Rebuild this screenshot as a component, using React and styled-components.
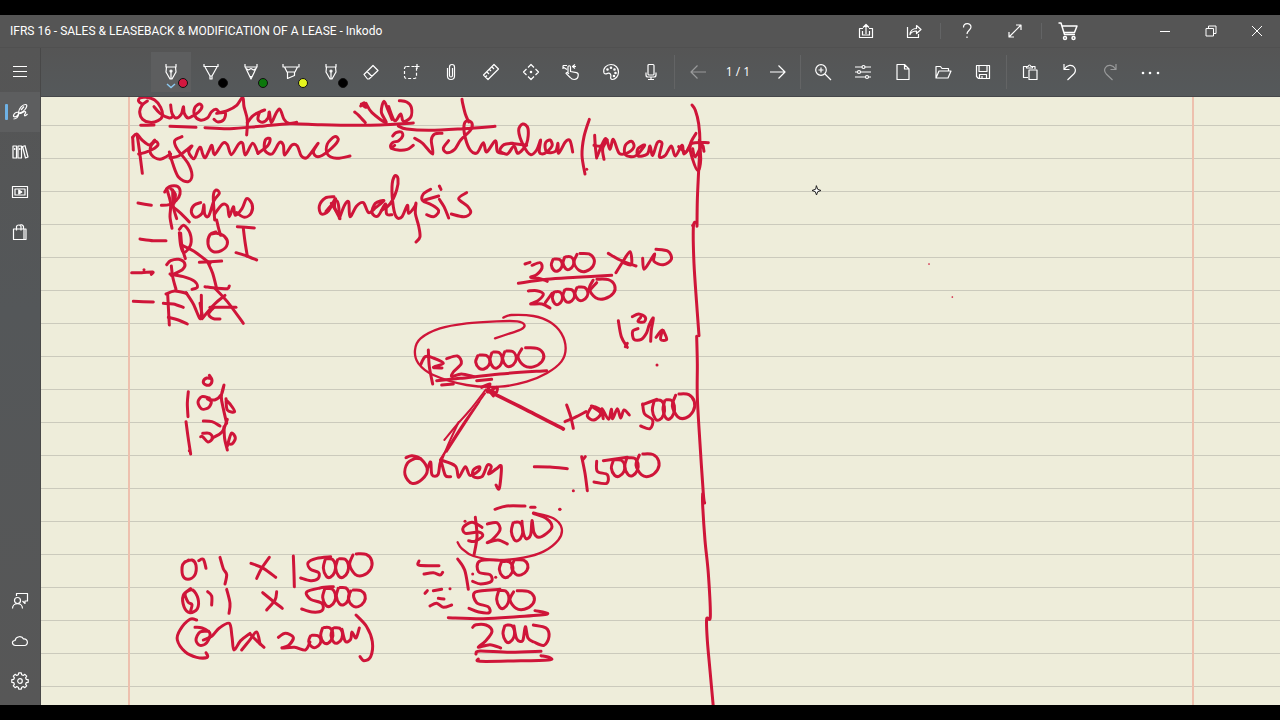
import React from "react";
import styled, { createGlobalStyle } from "styled-components";

const Global = createGlobalStyle`
  *, *::before, *::after { box-sizing: border-box; }
  body { margin: 0; background: #000; font-family: Roboto, "Open Sans", sans-serif; }
  button { font: inherit; color: inherit; border: 0; background: none; padding: 0; }
`;

const Shell = styled.div`
  display: flex;
  flex-direction: column;
  min-height: 100vh;
  padding: 15px 0;
  background: #000;
  color: #fff;
`;

const TitleBar = styled.header`
  display: flex;
  align-items: stretch;
  height: 33px;
  background: #555;
  border-bottom: 1px solid #505050;
`;

const Title = styled.h1`
  flex: 1;
  margin: 0;
  padding-left: 10px;
  font-size: 12px;
  font-weight: 400;
  line-height: 32px;
  white-space: nowrap;
  overflow: hidden;
`;

const TitleActions = styled.div`
  display: flex;
  align-items: center;
  margin-right: 50px;
`;

const Captions = styled.div`
  display: flex;
`;

const IconButton = styled.button`
  position: relative;
  display: flex;
  align-items: center;
  justify-content: center;
  flex: none;
  width: ${(p) => p.$w || 40}px;
  height: ${(p) => p.$h || 40}px;
  opacity: ${(p) => (p.$dim ? 0.4 : 1)};
  background: ${(p) => (p.$active ? "#5d5e5f" : "transparent")};
`;

const Glyph = styled.svg`
  display: block;
  flex: none;
  fill: none;
  stroke: currentColor;
  stroke-width: ${(p) => p.$weight || 1.2};
  stroke-linejoin: round;
  overflow: visible;
`;

const Divider = styled.span`
  flex: none;
  width: 1px;
  height: ${(p) => p.$h}px;
  margin: 0 ${(p) => p.$gap}px;
  background: #636465;
`;

const Body = styled.div`
  display: flex;
  flex: 1;
`;

const Sidebar = styled.nav`
  display: flex;
  flex-direction: column;
  flex: none;
  width: 41px;
  padding: 4px 0;
  background: linear-gradient(#555, #545759 40%, #575757);
  border-right: 1px solid #484848;
`;

const Spacer = styled.div`
  flex: 1;
`;

const ActiveBar = styled.span`
  position: absolute;
  left: 5px;
  top: 12px;
  width: 3px;
  height: 16px;
  border-radius: 1px;
  background: #6eb2e6;
`;

const Workspace = styled.main`
  display: flex;
  flex-direction: column;
  flex: 1;
  min-width: 0;
`;

const Toolbar = styled.div`
  display: flex;
  align-items: center;
  justify-content: center;
  height: 49px;
  background: linear-gradient(#555, #55595b);
  border-bottom: 1px solid #45474a;
`;

const Swatch = styled.span`
  position: absolute;
  left: 27px;
  top: 26px;
  width: 10px;
  height: 10px;
  border: 1px solid #111;
  border-radius: 50%;
  background: ${(p) => p.$color};
`;

const Chevron = styled.svg`
  position: absolute;
  left: 15px;
  top: 31px;
  fill: none;
  stroke: #8ccaf2;
  stroke-width: 1.4;
`;

const PageCount = styled.span`
  flex: none;
  width: 40px;
  font-family: "Open Sans", sans-serif;
  font-size: 12px;
  line-height: 20px;
  text-align: center;
  white-space: nowrap;
`;

const Paper = styled.section`
  flex: 1;
  overflow: hidden;
  background:
    linear-gradient(#edc0ae, #edc0ae) 87px 0 / 2px 100% no-repeat,
    linear-gradient(#edc0ae, #edc0ae) right 86px top 0 / 2px 100% no-repeat,
    repeating-linear-gradient(transparent 0 32px, #cbcabc 32px 33px) 0 -4px / 100% calc(100% + 4px),
    #eeedda;
`;

const Ink = styled.svg`
  display: block;
  width: 100%;
  fill: none;
  stroke: #cf1539;
  stroke-linecap: round;
  stroke-linejoin: round;
`;

const ICONS = {
  menu: <path d="M1 2.500h14M1 7.500h14M1 12.500h14" />,
  fountain: (
    <>
      <path d="M3 0v3h10V0M3.500 3L3 8l4 7h2l4-7-.5-5M8 7v8" />
      <circle cx="8" cy="7" r="1" />
    </>
  ),
  pen: <path d="M1 0v2.500h14V0M2 3l5 9v3h2v-3l5-9M7 12h2" />,
  pencil: <path d="M2 0v3h12V0M2.500 3.500L8 15l5.500-11.500M3 4.500l2.500 1.500L8 4.500 10.500 6 13 4.500M7 12.500h2" />,
  marker: <path d="M0 0v3h16V0M1.500 3l2.500 5h8l2.500-5M4.500 8v6.500l7-3V8" />,
  eraser: <path d="M1 10.500L10 1.500l5 5-9 8.500H4.500zM4 7.500l5 5" />,
  lasso: (
    <>
      <rect x="1.500" y="2.500" width="12" height="12" rx="2" strokeDasharray="3 2" />
      <path d="M14 0v5M11.500 2.500h5" />
    </>
  ),
  clip: <path d="M4.500 4v8a3.500 3.500 0 0 0 7 0V3a2.500 2.500 0 0 0-5 0v8.500a1.500 1.500 0 0 0 3 0V4" />,
  ruler: <path d="M.5 11L11 .5 15.500 5 5 15.500zM4 8l2 2M6.500 5.500l1.500 1.500M9 3l2 2M2.500 13l1.500-1.500" />,
  move: (
    <>
      <path d="M5 3.500L8 .5l3 3M5 12.500l3 3 3-3M3.500 5L.5 8l3 3M12.500 5l3 3-3 3" />
      <circle cx="8" cy="8" r=".7" fill="currentColor" />
    </>
  ),
  touch: (
    <path d="M5 9.500V3a1.200 1.200 0 0 1 2.500 0v4.500l6 1.200c1.500.4 2 1.300 1.700 3-.3 2.300-1.600 3.800-4 3.800-2 0-3-.7-4-2L3 9.300c.6-1 1.500-.6 3 .5M4 5.500L0 3M0 1.500h4M0 1.500V5M9 2.500h4M12 .5l-2.500 2 2.500 2" />
  ),
  palette: (
    <>
      <path d="M1 9C-.5 4 4 .5 8 .5c4.500 0 7.500 3.500 7.500 7.500s-3 7.500-6 7.500c-2 0-2-1.500-1.700-3 .4-2-.6-3.500-2.500-3.300C3.500 9.500 2.500 11 1 9z" />
      <circle cx="4.500" cy="5.500" r=".7" />
      <circle cx="8" cy="3.700" r=".7" />
      <circle cx="11.500" cy="5.500" r=".7" />
      <circle cx="12.500" cy="9" r=".7" />
      <circle cx="11" cy="12" r=".7" />
    </>
  ),
  mic: (
    <>
      <rect x="5" y=".5" width="6" height="10.500" rx="1" />
      <path d="M3 8.500v2.500q0 2 2 2h6q2 0 2-2V8.500M8 13v2.500M5 15.500h6" />
    </>
  ),
  back: <path d="M16 8H1M7.500 1.500L1 8l6.500 6.500" />,
  forward: <path d="M0 8h15M8.500 1.500L15 8l-6.500 6.500" />,
  zoom: (
    <>
      <circle cx="6" cy="6" r="5.300" />
      <path d="M10 10l6 6M3.500 6h5M6 3.500v5" />
    </>
  ),
  sliders: (
    <>
      <path d="M0 3h7M10 3h6M0 8h2.500M5.500 8H16M0 13h10.500M13.500 13H16" />
      <circle cx="8.500" cy="3" r="1.500" />
      <circle cx="4" cy="8" r="1.500" />
      <circle cx="12" cy="13" r="1.500" />
    </>
  ),
  file: <path d="M2 .5h7.500L14 5v10.500H2zM9.500 .5V5H14" />,
  folder: <path d="M1 14V2.500h4.500l1.500 2h6.500V7M1 14L4 7h12l-3 7z" />,
  save: <path d="M1.500 1.500h13v13h-11l-2-2zM4 1.500v6h8v-6M4.500 14.500v-4h7v4M7 12v2.500" />,
  paste: <path d="M6 13.500H1.500v-11H5M10 2.500h3V5M4.500 4V2.500h1.500q1.500-3 3 0h1.500V4zM7 6h8v9.500H7z" />,
  undo: <path d="M2 0v5.500h5.500M2.500 5C5 1 10 0 12.500 3.500c1.800 2.800.8 5-1 6.800L5.500 16" />,
  redo: <path d="M14 0v5.500H8.500M13.500 5C11 1 6 0 3.500 3.500c-1.800 2.800-.8 5 1 6.800L10.500 16" />,
  more: (
    <g fill="currentColor" stroke="none">
      <circle cx="1" cy="9" r="1.300" />
      <circle cx="8" cy="9" r="1.300" />
      <circle cx="16" cy="9" r="1.300" />
    </g>
  ),
  upload: <path d="M5 5.500H1.500v9h13v-9H11M4.500 8v4h7V8M8 11V2M5 4.500l3-3 3 3" />,
  share: <path d="M1.500 4v10.500h11V11M4 11.500c.5-4 2.500-6 6.500-6V2.500l4.500 4-4.500 4V8c-3 0-5 .8-6.500 3.500z" />,
  help: <path d="M4.500 4.500C4.500-.5 12-.5 12 4c0 3-4 3.500-4 7M8 13.500V15" />,
  expand: <path d="M2 14L14 2M9 2h5v5M2 9v5h5" />,
  cart: (
    <>
      <path d="M-1.500 0H1l3.500 11.500H15M2 3h15l-2.500 6.500H4" />
      <circle cx="5" cy="15" r="1.500" />
      <circle cx="13.500" cy="15" r="1.500" />
    </>
  ),
  minimize: <path d="M3 8.500h10" />,
  restore: <path d="M3 5.500h7.500v7.500H3zM5.500 5.500V3H13v7.500h-2.500" />,
  close: <path d="M3 3l10 10M13 3L3 13" />,
  ink: (
    <path d="M6.500 8.500C7 4 10.500.5 13.500.5c2 0 1.500 2.500-.5 5-2 2.700-5 4-6.500 3zM7 8C4 8 2 9.500 1.500 11.500c-.3 2 2.500 1.500 3.500.5s1.500-2 2-3.500M7 9c-.5 3-2.500 6-5.500 6M7.500 9.500c2 0 4-2 5.500-2 2 .5-1 3-.5 4 .5.700 1.500 0 3-1.500M9 6l3-3.500" />
  ),
  library: <path d="M1 2h3.500v12H1zM6 2h3.500v12H6zM10.500 2.500l2.500-.8L16 13l-2.500 1zM2.700 4v2M7.700 4v2" />,
  media: (
    <>
      <path d="M.5 2.500h15v11H.5zM3 5h10v6H3z" />
      <path d="M6.800 6v4l3-2z" fill="currentColor" />
    </>
  ),
  bag: <path d="M1.500 5h10.500v10.500H1.500zM12 5h2v10.500h-2M4.500 6.500v-4C5 .5 8.500.5 9 2.500v4M7 1.500c2-1.500 4-.5 4.500 1V5" />,
  feedback: (
    <>
      <circle cx="5.500" cy="7.500" r="3" />
      <path d="M.5 15.500c0-6.500 10-6.500 10 0M4.500 3V.5h11v7.500H13v2.500L10.500 8" />
    </>
  ),
  cloud: <path d="M3.500 12.500C-.5 12-.5 7.500 3 7.500 4 3 10 2.500 11.500 6c5-.5 5 6.500 1 6.500z" />,
  gear: (
    <>
      <path d="M6.700 -.2h2.600l.4 2 1.500.6 1.700-1.100 1.800 1.800-1.100 1.700.6 1.500 2 .4v2.600l-2 .4-.6 1.500 1.100 1.700-1.800 1.800-1.700-1.100-1.500.6-.4 2H6.700l-.4-2-1.500-.6-1.700 1.100-1.800-1.800 1.100-1.700-.6-1.500-2-.4V6.700l2-.4.6-1.500L1.300 3.100l1.800-1.800 1.700 1.100 1.500-.6z" />
      <circle cx="8" cy="8" r="2.300" />
    </>
  ),
};

function Icon({ name, size = 16, weight }) {
  return (
    <Glyph width={size} height={size} viewBox="0 0 16 16" $weight={weight} aria-hidden="true">
      {ICONS[name]}
    </Glyph>
  );
}

const PENS = [
  { icon: "fountain", label: "Fountain pen", color: "#d3173f", active: true },
  { icon: "pen", label: "Ballpoint pen", color: "#000" },
  { icon: "pencil", label: "Pencil", color: "#0c780c" },
  { icon: "marker", label: "Highlighter", color: "#e6f51e" },
  { icon: "fountain", label: "Second pen", color: "#000" },
];

const TOOLS = [
  ["eraser", "Eraser"],
  ["lasso", "Select"],
  ["clip", "Attach"],
  ["ruler", "Ruler"],
  ["move", "Pan"],
  ["touch", "Touch writing"],
  ["palette", "Colours"],
  ["mic", "Record"],
];

const FILE_TOOLS = [
  ["zoom", "Zoom in"],
  ["sliders", "Page settings"],
  ["file", "New"],
  ["folder", "Open"],
  ["save", "Save"],
];

/*
 * Each group of pen strokes has its own origin on the page; points are thirds of a pixel.
 * "loops" are closed round strokes: centre x, centre y, half width, half height.
 */
const INK = [
  {
    at: [120, 90],
    strokes: [
      "66,42 56,34 60,24 78,22 104,30 122,52 127,78 114,92 90,97 68,88 59,66 66,46 82,33",
      "102,50 120,70 148,84 160,78",
      "152,45 156,70 168,84 184,72 190,50 193,70 204,84 218,78 236,66 246,50 238,42 224,54 224,76 240,90 262,84 274,66 288,58 300,68 316,68 312,88 294,96 282,88",
      "290,70 322,62 350,46 368,22 372,50 382,90 380,135",
      "382,98 396,80 410,70 434,60 420,66 414,88 428,97 444,84 448,66 454,98 468,70 480,58 492,88 506,100 530,97",
      "62,106 102,105",
      "150,109 228,112",
      "255,113 330,116 420,109 510,101 600,104 700,106 780,105 880,99",
      "704,66 716,76 736,98",
      "722,48 732,38 738,52 724,42",
      "738,40 756,68 798,98 784,66 792,34 804,60 816,88",
      "806,50 824,92 842,72 850,94 872,82 874,52 860,36 838,32",
      "52,138 58,180 67,250",
      "38,142 40,180",
      "38,142 50,132 66,150 88,165 104,150",
      "56,192 74,188 98,178 114,164 106,154 92,170 94,194 120,208 152,192",
      "186,140 164,152 172,178 204,220 216,256 204,275 176,262 158,220 148,186",
      "150,204 176,198 202,178 216,168 206,186 222,206 234,180 242,172 248,192 256,203 268,180 276,166 284,194 308,160 322,164 334,194 356,162 368,160 376,195 398,160 414,190",
      "414,190 444,166 450,146 436,150 434,180 456,192 478,158 490,165 494,195 516,165 532,168 544,198 562,202 594,160 580,186 594,200 624,184 654,152 644,140 622,162 622,192 650,205 690,198",
      "54,339 94,346",
      "134,306 148,290 174,290 180,312 168,332 148,344 124,346",
      "140,296 152,340 150,380 156,415",
      "152,296 166,312 162,340",
      "158,300 160,350 170,386",
      "150,344 180,368 208,396",
      "242,338 222,346 214,366 226,382 246,370 252,344 254,372 266,378 282,332 298,310 288,300 280,318 284,390",
      "284,372 306,344 322,348 328,380 340,350 346,376 366,356 380,326 396,342 394,368 374,382 350,368",
      "642,320 616,324 598,348 604,372 626,362 646,326 644,352 660,386",
      "618,364 650,332 656,372 634,340",
      "658,385 674,345 686,336 690,380 710,348 730,338 746,368 768,352 792,332 766,340 756,368 774,378 796,342 800,372 816,374",
    ],
  },
  {
    at: [380, 90],
    strokes: [
      "55,108 80,117 150,121 250,116 345,109",
      "246,28 248,40 256,72 266,96",
      "38,138 48,128 64,126 68,138 56,152 38,158 32,172 54,180 82,178 100,166",
      "34,174 44,166",
      "104,145 128,160 158,192 154,150 164,132 186,130",
      "206,152 190,174 200,188 224,178 242,150 272,120 276,100 262,92 252,106 256,144 272,182 292,188 310,158 320,186 346,152 352,184 370,190",
      "398,160 372,164 360,182 382,192 402,168 414,190 440,160 444,116 428,102 416,122 430,166 452,194 470,180 482,150 478,186 494,190 516,168 510,150 496,160 500,186 526,184 534,160 536,190 556,156 570,152 578,186",
      "392,160 440,166",
      "628,88 612,140 606,196 615,252",
      "620,238",
      "644,136 646,170 650,204",
      "642,166 664,168 682,150 668,176 672,208",
      "652,198 676,146 690,178 700,148 718,190 744,188 762,170 754,154 736,166 736,194 766,198 794,166 774,176 774,198 802,192 810,168 818,196 832,158 846,160 838,200 856,196 874,168 886,198 906,166 912,192 930,170",
      "896,170 918,186 936,160 985,158",
      "948,130 930,166 938,208 954,242 962,210 958,150",
      "938,176 946,200 966,166 972,184",
      "4,362 30,342 50,300 54,266 44,258 36,290 40,350 50,382 66,380 82,346 86,370 104,350 108,340 106,370 116,408 120,440 108,456",
      "152,298 130,312 128,332 154,344 176,362 162,380 140,374",
      "134,330 176,318",
      "178,288 183,298",
      "178,328 192,350 206,384",
      "260,308 236,326 262,348 272,368 252,380 214,372",
    ],
  },
  {
    at: [400, 97],
    strokes: [
      "876,24 886,40 896,80 900,138 896,220 892,310 891,388",
      "878,386 886,376 880,392 882,500 890,620 897,716",
      "890,718 892,800 892,900 900,1040 910,1190 914,1218",
      "908,1190 908,1225 915,1330 925,1430 931,1558 920,1566 922,1630 930,1720 940,1830",
    ],
  },
  {
    at: [120, 220],
    strokes: [
      "60,57 100,62 138,62",
      "178,28 192,16 210,40 212,74 192,98 182,76 178,38",
      "182,40 186,80 196,116",
      "186,76 222,94 270,130",
      "290,0 296,26 302,46",
      "288,36 270,44 264,72 278,94 304,92 322,72 314,50 290,40 274,42",
      "352,20 403,24",
      "370,25 375,65 382,108",
      "348,98 380,108 410,120",
      "35,158 65,158 98,156 94,163",
      "72,149",
      "140,134 152,122 176,118 194,130 188,148 154,166",
      "154,138 158,170 168,208",
      "150,162 190,170 224,184 232,202 216,208",
      "238,127 305,123",
      "264,128 278,160 290,206",
      "255,200 290,205 322,206 328,198",
      "40,244 100,246",
      "138,222 164,213 200,220",
      "143,222 145,260 148,315",
      "130,250 160,252 190,262",
      "145,292 175,300 202,312",
      "198,218 220,252 242,296 244,226",
      "246,296 284,252 315,226",
      "240,250 248,292",
      "282,262 266,282 280,296 300,297",
      "285,205 322,245 370,310",
      "270,262 348,262",
      "268,466 276,480 270,494 256,494 250,484 260,474 272,476",
      "205,515 202,550 204,590",
      "268,534 246,530 234,546 244,566 264,564 274,546 262,536 284,540 304,524 312,495 304,530 310,566 320,610",
      "318,536 322,570 344,575 330,552 318,540",
      "198,605 204,650 212,702",
      "208,692",
      "250,603 276,605 300,618",
      "248,640 268,640 278,654 264,666 248,650 242,650",
      "276,654 306,636 322,598",
      "312,620 314,656 322,690",
      "322,678 334,640 346,654 336,672 320,670",
    ],
  },
  {
    at: [400, 230],
    strokes: [
      "375,102 390,97",
      "396,106 420,98 426,114 410,134 392,142 420,146 442,154",
      "355,160 440,148 530,142 635,136",
      "625,70 660,90 708,108",
      "648,128 668,96 690,65 694,104 670,98",
      "728,85 732,118 752,90 764,72 762,94 790,104 814,88 804,64 768,58",
      "385,183 410,182 430,192 414,212 392,222 426,222 450,234",
      "436,218 456,190",
      "570,180 590,158",
      "655,272 664,320 682,352",
      "676,350 682,340",
      "697,260 716,252 736,262 732,276 714,274 722,262",
      "714,296 698,304 702,328 724,328 740,308 748,284 760,264 754,300 752,334",
      "768,322 786,300 782,328 800,328 790,302",
      "771,405",
      "85,360 88,410 98,462",
      "62,404 76,380 100,384 130,400 100,412 126,414",
      "140,386 172,378 184,400 160,426 156,440 184,432 222,440",
      "110,452 180,445 300,432 440,422",
      "125,465 160,462",
      "230,452 275,448",
    ],
    loops: [
      [470, 105, 16, 19],
      [505, 99, 16, 20],
      [552, 97, 30, 28],
      [472, 204, 15, 20],
      [506, 197, 17, 20],
      [544, 191, 19, 21],
      [606, 177, 38, 31],
      [248, 396, 21, 22],
      [288, 390, 18, 25],
      [328, 386, 20, 24],
      [392, 382, 38, 30],
    ],
  },
  {
    at: [400, 230],
    width: 7,
    strokes: [
      "310,263 334,255 400,258 450,276 484,310 497,355 484,395 440,430 380,455 300,470 200,465 100,435 55,400 45,360 62,325 120,295 200,280 290,274 352,274 373,284 364,298 330,310 285,325",
    ],
  },
  {
    at: [390, 360],
    strokes: [
      "275,82 300,72 292,96 320,82 318,98 298,90 310,108",
      "530,135 542,170 550,205",
      "525,185 555,172 588,155",
      "602,144 592,168 612,180 632,160 604,138 632,150 640,176 636,146 656,178 664,148 668,176 682,146 692,174 702,150 718,165",
      "758,134 800,118",
      "758,132 764,162 788,180 780,206 752,198",
      "75,295 92,296",
      "78,294 52,310 45,344 66,370 96,358 112,330 94,298 66,287 48,293",
      "112,328 122,306 126,344 144,344 152,304 166,346 182,350",
      "152,300 196,318 206,352 226,320 240,346 266,332 268,320 250,330 250,350 276,350 292,316 304,320 296,342 320,326 334,320 328,385 318,375",
      "433,320 480,321 532,326",
      "575,290 585,340 592,392",
      "578,300 586,290",
      "620,304 622,334 652,344 650,370 612,366",
      "640,302 712,292",
      "550,392",
      "510,448",
    ],
    loops: [
      [805, 150, 18, 31],
      [836, 148, 17, 30],
      [880, 138, 33, 38],
      [684, 324, 20, 26],
      [724, 320, 20, 28],
      [772, 315, 34, 35],
    ],
  },
  {
    at: [390, 360],
    width: 6,
    strokes: [
      "288,88 240,150 200,195 163,240",
      "285,100 226,182 164,278 150,300",
      "268,125 215,205 170,275",
      "206,186 178,246 158,294",
    ],
  },
  { at: [390, 360], width: 11, strokes: ["292,92 400,145 520,207"] },
  {
    at: [160, 540],
    strokes: [
      "86,60 68,74 68,106 84,118 104,106 108,76 96,60 74,66",
      "116,62 130,58 138,85",
      "180,52 190,86 200,104 195,132",
      "273,70 310,85 347,112",
      "328,52 305,85 290,115",
      "400,48 402,100 403,140",
      "512,50 470,55 444,68 452,88 476,98 474,116 452,122 422,114",
      "92,146 70,166 72,200 90,218 112,206 114,176 98,150 76,160 84,186 96,194 92,212",
      "143,155 155,168 155,195",
      "200,148 210,190 207,220",
      "308,158 335,180 367,205",
      "350,155 345,180 320,210",
      "520,140 480,144 440,156 452,178 486,190 486,212 456,216 425,207",
      "110,240 90,238 60,270 52,300 75,335 110,352 142,352 138,338",
      "146,274 120,276 108,300 120,316 140,308 150,280 126,264 105,262",
      "130,300 156,288 178,264 208,250 216,290 222,330 242,302 270,280",
      "270,282 290,302 312,322",
      "245,330 268,302 290,276 300,312",
      "355,292 376,280 400,292 386,316 366,324 404,322 436,330 450,306",
      "546,268 556,304 572,298 576,276 588,294 598,264",
      "588,225 620,260 637,305 632,350 612,362 600,350",
    ],
    loops: [
      [508, 84, 18, 29],
      [546, 84, 19, 29],
      [602, 74, 33, 34],
      [507, 172, 19, 28],
      [548, 168, 19, 27],
      [590, 175, 25, 26],
      [464, 304, 18, 19],
      [500, 286, 18, 25],
      [530, 286, 17, 24],
    ],
  },
  {
    at: [400, 490],
    strokes: [
      "285,58 320,48 375,48",
      "392,52 405,52",
      "479,58",
      "195,94",
      "246,112 216,97 190,112 196,130 236,126 248,138 224,154 206,152",
      "226,82 231,140 222,195",
      "262,102 290,98 300,120 278,148 262,158 294,150 322,162",
      "366,94 368,120 378,146 392,134 396,92 402,128 416,142 440,130 456,110 440,86 400,70",
      "57,213 58,226 117,227",
      "72,252 100,248 120,255 128,247",
      "173,207 194,240 205,298",
      "218,252",
      "287,262",
      "330,212 242,212 236,246 270,254 274,274 242,282 218,274",
      "75,310 82,302",
      "100,302 125,298",
      "150,296",
      "115,325 132,327",
      "90,348 110,340 130,352 155,345",
      "300,298 226,306 230,338 264,350 268,368 236,366 207,355",
      "145,383 250,386 350,380 442,372 405,362",
      "218,412 228,404 258,405 276,424 256,454 235,472 270,464 302,474",
      "342,408 350,446 368,452 376,410 384,444 402,456 432,466 447,440 438,414 400,405",
      "228,492 240,483 330,487 423,484",
      "235,507 240,514 340,513 445,510 450,503 423,497",
    ],
    loops: [
      [351, 124, 17, 29],
      [318, 238, 20, 25],
      [359, 232, 24, 24],
      [308, 328, 18, 28],
      [366, 330, 36, 29],
      [326, 431, 17, 27],
    ],
  },
  {
    at: [400, 490],
    width: 7,
    strokes: ["400,68 460,85 485,115 475,150 430,185 370,203 290,210 220,198 185,175 173,157"],
  },
  { at: [900, 250], width: 5, strokes: ["87,42", "157,141"] },
];

/* Turns pen points into a smooth curve that passes through all of them. */
function smooth(text) {
  const pts = text.split(" ").map((p) => p.split(",").map(Number));
  let d = `M${pts[0].join(" ")}`;
  if (pts.length === 1) return `${d}h0.1`;
  for (let i = 0; i < pts.length - 1; i += 1) {
    const a = pts[i - 1] || pts[i];
    const b = pts[i];
    const c = pts[i + 1];
    const e = pts[i + 2] || c;
    const c1 = [b[0] + (c[0] - a[0]) / 6, b[1] + (c[1] - a[1]) / 6];
    const c2 = [c[0] - (e[0] - b[0]) / 6, c[1] - (e[1] - b[1]) / 6];
    d += `C${[...c1, ...c2, ...c].map((n) => n.toFixed(1)).join(" ")}`;
  }
  return d;
}

/* A hand-drawn round: starts left of the top, runs down, round and back over its start. */
function round([cx, cy, rx, ry]) {
  return smooth(
    [
      [-0.7, -0.85],
      [-1, 0],
      [-0.5, 0.85],
      [0.2, 0.95],
      [0.9, 0.4],
      [1, -0.35],
      [0.5, -0.9],
      [-0.4, -0.95],
    ]
      .map(([x, y]) => `${cx + x * rx},${cy + y * ry}`)
      .join(" ")
  );
}

function Handwriting() {
  return (
    <Ink viewBox="41 97 1239 608" role="img" aria-label="Handwritten notes on performance evaluation">
      {INK.map((group, i) => (
        <g
          key={i}
          transform={`translate(${group.at[0]} ${group.at[1]}) scale(0.33333)`}
          strokeWidth={group.width || 9}
        >
          {group.strokes.map((s) => (
            <path key={s} d={smooth(s)} />
          ))}
          {(group.loops || []).map((l) => (
            <path key={l.join()} d={round(l)} />
          ))}
        </g>
      ))}
      <path
        d="M816.500 186l1.200 3.300 3.300 1.200-3.300 1.200-1.200 3.300-1.200-3.300-3.300-1.200 3.300-1.200z"
        fill="#fff"
        stroke="#222"
        strokeWidth="1"
      />
    </Ink>
  );
}

export default function App() {
  return (
    <>
      <Global />
      <Shell>
        <TitleBar>
          <Title>IFRS 16 - SALES &amp; LEASEBACK &amp; MODIFICATION OF A LEASE - Inkodo</Title>
          <TitleActions>
            <IconButton $w={48} $h={32} aria-label="Export"><Icon name="upload" /></IconButton>
            <IconButton $w={48} $h={32} aria-label="Share"><Icon name="share" /></IconButton>
            <Divider $h={16} $gap={2} />
            <IconButton $w={48} $h={32} aria-label="Help"><Icon name="help" /></IconButton>
            <IconButton $w={48} $h={32} aria-label="Full screen"><Icon name="expand" /></IconButton>
            <Divider $h={16} $gap={2} />
            <IconButton $w={48} $h={32} aria-label="Store"><Icon name="cart" weight={1.5} /></IconButton>
          </TitleActions>
          <Captions>
            <IconButton $w={46} $h={32} aria-label="Minimise"><Icon name="minimize" weight={1} /></IconButton>
            <IconButton $w={46} $h={32} aria-label="Restore"><Icon name="restore" weight={1} /></IconButton>
            <IconButton $w={46} $h={32} aria-label="Close"><Icon name="close" weight={1} /></IconButton>
          </Captions>
        </TitleBar>
        <Body>
          <Sidebar aria-label="Main">
            <IconButton aria-label="Menu"><Icon name="menu" /></IconButton>
            <IconButton $active aria-label="Notebook">
              <ActiveBar />
              <Icon name="ink" />
            </IconButton>
            <IconButton aria-label="Library"><Icon name="library" /></IconButton>
            <IconButton aria-label="Tutorials"><Icon name="media" /></IconButton>
            <IconButton aria-label="Shop"><Icon name="bag" /></IconButton>
            <Spacer />
            <IconButton aria-label="Feedback"><Icon name="feedback" /></IconButton>
            <IconButton aria-label="Cloud"><Icon name="cloud" /></IconButton>
            <IconButton aria-label="Settings"><Icon name="gear" /></IconButton>
          </Sidebar>
          <Workspace>
            <Toolbar role="toolbar" aria-label="Drawing tools">
              {PENS.map((pen) => (
                <IconButton key={pen.label} $active={pen.active} aria-label={pen.label}>
                  <Icon name={pen.icon} />
                  <Swatch $color={pen.color} />
                  {pen.active && (
                    <Chevron width="10" height="6" viewBox="0 0 10 6"><path d="M1 1l4 3.500L9 1" /></Chevron>
                  )}
                </IconButton>
              ))}
              {TOOLS.map(([name, label]) => (
                <IconButton key={name} aria-label={label}><Icon name={name} /></IconButton>
              ))}
              <Divider $h={34} $gap={3} />
              <IconButton $dim disabled aria-label="Previous page"><Icon name="back" /></IconButton>
              <PageCount>1 / 1</PageCount>
              <IconButton aria-label="Next page"><Icon name="forward" /></IconButton>
              <Divider $h={34} $gap={2} />
              {FILE_TOOLS.map(([name, label]) => (
                <IconButton key={name} aria-label={label}><Icon name={name} /></IconButton>
              ))}
              <Divider $h={34} $gap={3} />
              <IconButton aria-label="Paste"><Icon name="paste" /></IconButton>
              <IconButton aria-label="Undo"><Icon name="undo" /></IconButton>
              <IconButton $dim disabled aria-label="Redo"><Icon name="redo" /></IconButton>
              <IconButton aria-label="More"><Icon name="more" /></IconButton>
            </Toolbar>
            <Paper>
              <Handwriting />
            </Paper>
          </Workspace>
        </Body>
      </Shell>
    </>
  );
}
